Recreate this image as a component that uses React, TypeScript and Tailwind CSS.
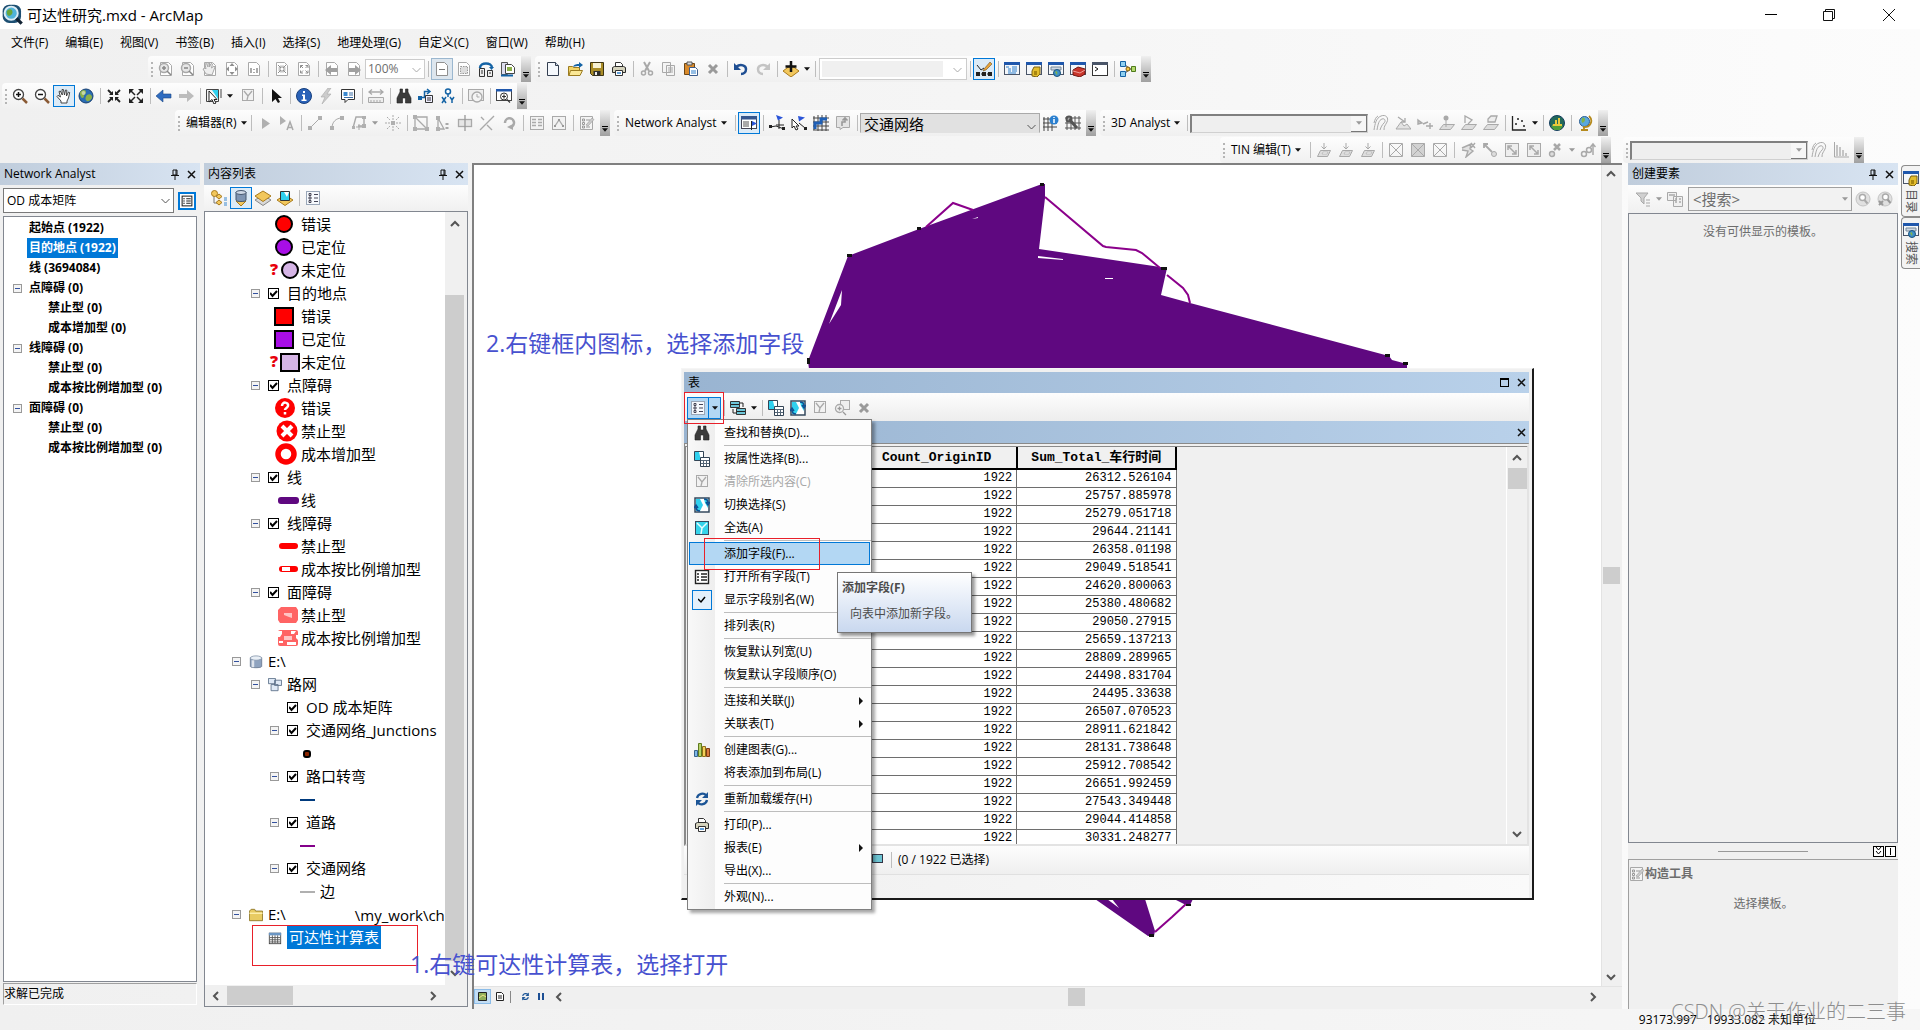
import { useState, type ReactNode } from 'react';

const g = '#a9a9a9';

const page = (color: string) => <path d="M2.5 1.5h8l3 3v10h-11z" fill="#fff" stroke={color} />;
const windowFrame = (
  <>
    <rect x="0.5" y="1.5" width="15" height="12" fill="#f4f7fa" stroke="#4a5568" />
    <path d="M0 1h16v3H0z" fill="#1f57ac" />
  </>
);
const globe = (
  <>
    <circle cx="8" cy="8" r="7" fill="#2a6db5" stroke="#173f70" />
    <path d="M3 3c3-2 5-1 5 1s-2 2-2 4-2 3-3 1-2-4 0-6zM9 7c3-2 5 0 5 2s-3 5-5 4-2-4 0-6z" fill="#8cb04a" />
    <circle cx="5.5" cy="5" r="2" fill="#fff" opacity=".5" />
  </>
);
const tin = (
  <>
    <path d="M1.5 1.5h13v13h-13z" fill="none" stroke={g} />
    <path d="M2 2l12 12M14 2L2 14" stroke={g} />
  </>
);
const plate = (
  <>
    <path d="M4.5 8.5h10l-3 6h-10z" fill="#ddd" stroke={g} />
    <path d="M6 12h5l1-2H7z" fill="#f4f4f4" stroke={g} strokeWidth=".6" />
    <path d="M8 1v6M5.5 4.5L8 7l2.5-2.5" stroke={g} fill="none" />
  </>
);
const selectTile = (
  <>
    <rect x="1" y="1" width="14" height="14" fill="#fff" stroke="#34495e" strokeWidth="1.5" />
    <path d="M2 2h4l3 6-3 6H2z" fill="#2fd0ee" />
    <path d="M10 2h4v9l-3-5z" fill="#2fd0ee" />
  </>
);

const icons: Record<string, ReactNode> = {
  logo: (
    <>
      <rect x="0.5" y="0.5" width="14" height="14" rx="5" fill="#1d4f72" />
      <circle cx="7" cy="7" r="5" fill="#4fb3d9" stroke="#dcecf5" strokeWidth="1.5" />
      <path d="M4 5c2-2 4-1 4 1s-2 3-3 3-2-3-1-4z" fill="#68a63c" />
      <path d="M11 11l4 4" stroke="#123" strokeWidth="2.5" />
    </>
  ),
  pageZoomIn: <>{page(g)}<circle cx="6" cy="7" r="4.5" fill="#e6e6e6" stroke={g} strokeWidth="1.5" /><path d="M4 7h4M6 5v4M9 10l4 4" stroke="#888" strokeWidth="1.5" /></>,
  pageZoomOut: <>{page(g)}<circle cx="6" cy="7" r="4.5" fill="#e6e6e6" stroke={g} strokeWidth="1.5" /><path d="M4 7h4M9 10l4 4" stroke="#888" strokeWidth="1.5" /></>,
  pageHand: <>{page(g)}<path d="M4 13L1 8l2-1 1 1-1-5 1.5-.5L6 6V2h1.5v4L9 2.5l1.5.5L9.5 7 12 5l1 1-3 8z" fill="#eee" stroke={g} /></>,
  pageFull: <>{page(g)}<path d="M8 2l2.500 3h-5zM8 14l2.500-3h-5zM2 8l3-2.500v5zM14 8l-3-2.500v5z" fill="#8f8f8f" /></>,
  pageOne: <>{page(g)}<path d="M5 7v5M11 7v5M8 8v1M8 11v1" stroke="#8f8f8f" strokeWidth="1.5" /></>,
  pageIn: <>{page(g)}<path d="M4 4l3 3H4.5M7 7V4.5M12 4L9 7h2.5M9 7V4.5M4 12l3-3H4.5M7 9v2.5M12 12L9 9h2.5M9 9v2.5" fill="none" stroke="#8f8f8f" /></>,
  pageOut: <>{page(g)}<path d="M4.5 7V4.5H7M4.5 4.5L7 7M9.5 4.5H12V7M12 4.5L9.5 7M4.5 9.5V12H7M4.5 12L7 9.5M9.5 12H12V9.5M12 12L9.5 9.5" fill="none" stroke="#8f8f8f" /></>,
  pagePrev: <>{page(g)}<path d="M1 9l6-5v3h6v4H7v3z" fill="#a0a0a0" /></>,
  pageNext: <>{page(g)}<path d="M15 9L9 4v3H3v4h6v3z" fill="#a0a0a0" /></>,
  draft: <>{page('#909090')}<path d="M5 8.5h6" stroke="#777" /></>,
  focusFrame: <>{page(g)}<rect x="4.5" y="5.5" width="7" height="7" fill="#ddd" stroke="#999" strokeDasharray="1.5 1" /></>,
  layoutSwap: (
    <>
      <path d="M2 7c0-6 12-6 12 0" fill="none" stroke="#1463a5" strokeWidth="2.5" />
      <path d="M11 6h5l-2.5 3z" fill="#1463a5" />
      <path d="M1.5 7.5h5v8h-5zM9.5 9.5h5v6h-5z" fill="#eee" stroke="#333" />
      <path d="M3 10h2M3 12h2M11 12h2" stroke="#333" />
    </>
  ),
  dataPages: (
    <>
      <path d="M1.5 1.5h6v12h-6z" fill="#dde" stroke="#555" />
      <path d="M5.5 3.5h6l3 3v6h-9z" fill="#fff" stroke="#444" />
      <rect x="7" y="6" width="5" height="4" fill="#8cb04a" />
      <path d="M1 14.5h12" stroke="#1463a5" strokeWidth="2" />
    </>
  ),
  newDoc: <><path d="M2.5 1.5h8l3 3v10h-11z" fill="#f5f8fc" stroke="#333e50" /><path d="M10.5 1.5v3h3" fill="#ccd8e8" stroke="#333e50" /></>,
  open: (
    <>
      <path d="M1.5 5.5h4l1 1h6v8h-11z" fill="#f3d467" stroke="#9b7b20" />
      <path d="M3.5 9.5h12l-2.5 5h-11z" fill="#fbe896" stroke="#9b7b20" />
      <path d="M6 6c1-3 4-3 6-3V1l4 3-4 3V5c-2 0-4 0-6 1z" fill="#1463a5" />
    </>
  ),
  save: (
    <>
      <path d="M1.5 1.5h13v13h-11l-2-2z" fill="#a98c26" stroke="#3d3311" />
      <path d="M4 2h8v5H4z" fill="#f7f1d2" />
      <path d="M4.5 10h7v4.5h-7z" fill="#2d2d2d" />
      <path d="M6 11h2v3H6z" fill="#eee" />
    </>
  ),
  print: (
    <>
      <path d="M4.5 6V1.5h5l2 2V6" fill="#fff" stroke="#333" />
      <path d="M1.5 6.5l2-1h9l2 1v5h-13z" fill="#d5d3bd" stroke="#2c2c2c" />
      <path d="M4.5 9.5h7v5h-7z" fill="#fff" stroke="#333" />
      <path d="M6 12h4" stroke="#2d7fcb" strokeWidth="1.5" />
    </>
  ),
  cut: <><path d="M5 1l5 9M11 1L6 10" stroke={g} strokeWidth="2" /><circle cx="4.5" cy="12" r="2" fill="none" stroke={g} strokeWidth="1.5" /><circle cx="11.5" cy="12" r="2" fill="none" stroke={g} strokeWidth="1.5" /></>,
  copy: <><path d="M1.5 1.5h8v10h-8zM5.5 4.5h8v10h-8z" fill="#f4f4f4" stroke={g} /><path d="M7 7h5M7 9h5M7 11h5" stroke={g} /></>,
  paste: (
    <>
      <path d="M1.5 2.5h10v11h-10z" fill="#d98a2b" stroke="#6d4615" />
      <path d="M4 1h5v3H4z" fill="#ddd" stroke="#555" />
      <path d="M6.5 6.5h6l2 2v6h-8z" fill="#fff" stroke="#3b5c8c" />
      <path d="M8 10h5M8 12h5" stroke="#2d7fcb" />
    </>
  ),
  remove: <path d="M4 4l8 8M12 4l-8 8" stroke="#9a9a9a" strokeWidth="3" />,
  undo: <><path d="M3 6c5-4 10-1 10 2s-2 5-5 5" fill="none" stroke="#1f4f93" strokeWidth="2.5" /><path d="M1 2v7h7z" fill="#1f4f93" /></>,
  redo: <><path d="M13 6C8 2 3 5 3 8s2 5 5 5" fill="none" stroke="#c4c4c4" strokeWidth="2.5" /><path d="M15 2v7H8z" fill="#c4c4c4" /></>,
  addData: <><path d="M8 4l8 6-8 6-8-6z" fill="#f2c75c" stroke="#a87a1c" /><path d="M8 0v11M2.5 5.5h11" stroke="#111" strokeWidth="2.5" /></>,
  editTool: <><path d="M2 13h12" stroke="#222" strokeDasharray="2 1" /><path d="M0 11h4v4H0zM6 11h4v4H6zM12 11h4v4h-4z" fill="#222" /><path d="M1 4l4 5 3-2" stroke="#222" fill="none" /><path d="M8 8l6-7 2 2-6 6-3 1z" fill="#e8a33a" stroke="#5b3e12" strokeWidth=".5" /></>,
  tocWin: <>{windowFrame}<path d="M2 6h3M4 8h3M4 10h3M8 6h5M8 8h5M8 10h5M4 12h8" stroke="#2d7fcb" /></>,
  catalogWin: <>{windowFrame}<path d="M8 6h6v7l-3 3-5-1v-5z" fill="#e3bd2c" stroke="#7b6110" /><path d="M8 10h3v4H8z" fill="#a8860f" /></>,
  searchWin: <>{windowFrame}<path d="M3 6h10v3H3z" fill="#cfd8e3" stroke="#789" /><circle cx="9" cy="12" r="3.5" fill="#3d8fc9" stroke="#1c537c" /><path d="M7 11c2-2 3 1 2 3z" fill="#85b64a" /></>,
  toolboxWin: <>{windowFrame}<path d="M3 9l5-3 7 2v5l-5 3-7-2z" fill="#c8352b" stroke="#701713" /><path d="M3 10l7 2 5-3" stroke="#f0a09a" fill="none" /></>,
  pythonWin: <><rect x="0.5" y="1.5" width="15" height="13" fill="#fff" stroke="#333" /><path d="M0 1h16v3H0z" fill="#4a5568" /><path d="M3 6l3 2-3 2" fill="none" stroke="#111" /></>,
  model: <><path d="M4 3l6 5-6 5M9 8h5" stroke="#333" fill="none" /><path d="M.5.5h5v5h-5zM.5 10.5h5v5h-5z" fill="#8fd0f0" stroke="#1463a5" /><path d="M11.5 5.5h4v5h-4z" fill="#b4d96c" stroke="#4e7a1b" /><circle cx="8" cy="8" r="2" fill="#f5c542" stroke="#7b5c0c" /></>,
  zoomIn: <><circle cx="6.5" cy="6.5" r="5" fill="#fff" stroke="#444" strokeWidth="1.3" /><path d="M4 6.5h5M6.5 4v5" stroke="#111" strokeWidth="1.5" /><path d="M10.5 10.5l4.5 4.5" stroke="#8a5a35" strokeWidth="2.5" /></>,
  zoomOut: <><circle cx="6.5" cy="6.5" r="5" fill="#fff" stroke="#444" strokeWidth="1.3" /><path d="M4 6.5h5" stroke="#111" strokeWidth="1.5" /><path d="M10.5 10.5l4.5 4.5" stroke="#8a5a35" strokeWidth="2.5" /></>,
  pan: <path d="M5 15v-2L1 8.5l1-1.2L4.5 9 3 3.5l1.3-.5L6.3 7 6 1.5h1.4L8.5 7l1-5 1.3.2L10.5 8l2-4 1.2.6L12.5 10 11 13v2z" fill="#fff" stroke="#333" strokeWidth=".9" />,
  globe,
  fixedIn: <><path d="M2 2l4 4M14 2l-4 4M2 14l4-4M14 14l-4-4" stroke="#222" strokeWidth="1.8" /><path d="M7 3v4H3zM9 3v4h4zM7 13V9H3zM9 13V9h4z" fill="#222" /></>,
  fixedOut: <><path d="M3 3l4 4M13 3L9 7M3 13l4-4M13 13L9 9" stroke="#222" strokeWidth="1.5" /><path d="M1 6V1h5zM15 6V1h-5zM1 10v5h5zM15 10v5h-5z" fill="#222" /></>,
  back: <path d="M0 8l7-6v4h8v4H7v4z" fill="#2f6cc0" stroke="#1d4784" strokeWidth=".6" />,
  forward: <path d="M16 8L9 2v4H1v4h8v4z" fill="#bcbcbc" />,
  selectFeatures: (
    <>
      <path d="M.5 1.5h12v12H.5z" fill="#f4f4f4" stroke="#444" />
      <path d="M6 2h6v9z" fill="#2fd0ee" />
      <path d="M15 1v9" stroke="#444" />
      <path d="M3 3v11l3-2.500L8 16l2-1-2-3.500h3z" fill="#fff" stroke="#222" />
    </>
  ),
  clear: <><rect x="2.5" y="1.5" width="11" height="11" fill="#f2f2f2" stroke={g} /><path d="M4 3l4 5 4-5M8 8l-1 4" fill="none" stroke={g} strokeWidth="1.3" /></>,
  cursor: <path d="M4 1v13l3.5-3L10 15l2-1-2-4h4z" fill="#111" />,
  info: <><circle cx="8" cy="8" r="7.5" fill="#2a62b8" stroke="#18407e" /><path d="M7 3h2v2H7zM6 6.5h3v5h1.5V13h-5v-1.5H7V8H6z" fill="#fff" /></>,
  bolt: <path d="M10 0L3 9h4l-3 7 9-10H9l4-6z" fill="#ccc" stroke="#aaa" strokeWidth=".6" />,
  popup: <><path d="M1.5 1.5h13v10H8l-3 3v-3H1.5z" fill="#fff" stroke="#333" /><path d="M3.5 4h4v4h-4z" fill="#3c8ad0" /><path d="M9 5h4M9 7h4M4 9.5h9" stroke="#3c6ea5" /></>,
  measure: <><path d="M1 4h14M4 1.5L1 4l3 2.5M12 1.5L15 4l-3 2.5" stroke={g} strokeWidth="1.3" fill="none" /><path d="M.5 9.5h15v5H.5zM3 12v2M6 12v2M9 12v2M12 12v2" stroke={g} fill="#eee" /></>,
  find: <path d="M4 1h2.5v4h3V1H12v3l3 6v5H9.5v-5h-3v5H1v-5l3-6z" fill="#3b3b3b" stroke="#222" strokeWidth=".6" />,
  route: <><path d="M2.5 9.5h4v-6h5M9 1l3 2.5L9 6" fill="none" stroke="#1463a5" strokeWidth="1.5" /><path d="M7.5 7.5h7v7h-7z" fill="#eef" stroke="#333" /><path d="M9 10h4M9 12h4" stroke="#333" /><path d="M0 8h4v4H0z" fill="#1463a5" /></>,
  gotoXY: <><circle cx="8" cy="3.5" r="2.5" fill="#fff" stroke="#1463a5" strokeWidth="1.5" /><path d="M8 6v3M2 9l4 6M6 9l-4 6M10 9l2 3 2-3M12 12v3" stroke="#1463a5" strokeWidth="1.5" fill="none" /></>,
  time: <><rect x="0.5" y="1.5" width="15" height="11" fill="#eee" stroke={g} /><circle cx="9" cy="9" r="5" fill="#f4f4f4" stroke={g} strokeWidth="1.3" /><path d="M9 6v3h2.5" stroke={g} fill="none" /></>,
  viewer: <><rect x="0.5" y="1.5" width="15" height="11" fill="#fff" stroke="#444" /><path d="M0 1h16v2.5H0z" fill="#1f57ac" /><circle cx="8" cy="8.5" r="3.5" fill="#fff" stroke="#333" /><path d="M6 8.5h4M8 6.5v4M11 11.5l3 3" stroke="#333" strokeWidth="1.2" /></>,
  editArrow: <path d="M5 3v11l8-5.5z" fill="#b0b0b0" />,
  editText: <><path d="M1 1v9l6-4z" fill="#b0b0b0" /><path d="M8 15l3-8 3 8M9 12.5h4" fill="none" stroke="#aaa" strokeWidth="1.5" /></>,
  line: <><path d="M3 13L13 3" stroke={g} /><path d="M1 11h4v4H1zM11 1h4v4h-4z" fill="#b0b0b0" /></>,
  arc: <><path d="M3 13C3 7 7 3 13 3" fill="none" stroke={g} /><path d="M1 11h4v4H1zM11 1h4v4h-4z" fill="#b0b0b0" /></>,
  trace: <><path d="M2 13L5 2h8v9H7" fill="none" stroke={g} strokeWidth="1.4" /><path d="M1 11h3v3H1zM11 1h4v3h-4zM11 9h4v4h-4z" fill="#b0b0b0" /><path d="M8 9v6M5 12h6" stroke={g} /></>,
  pointAdd: <><path d="M8 0v5M8 11v5M0 8h5M11 8h5M2 2l3 3M14 2l-3 3M2 14l3-3M14 14l-3-3" stroke={g} strokeDasharray="2 1" /><path d="M6 6h4v4H6z" fill="#b0b0b0" /></>,
  vertices: <><path d="M2 2h12v12H2zM2 2l12 12" fill="none" stroke={g} strokeWidth="1.3" /><path d="M0 0h4v4H0zM12 12h4v4h-4zM0 12h4v4H0z" fill="#b0b0b0" /></>,
  reshape: <><path d="M3 14V3l6 11z" fill="none" stroke={g} strokeWidth="1.3" /><path d="M1 1h4v4H1zM1 12h4v4H1z" fill="#b0b0b0" /><path d="M12 8v8" stroke={g} strokeDasharray="2 2" strokeWidth="3" /></>,
  cutPoly: <><rect x="1.5" y="4.5" width="13" height="7" fill="#e6e6e6" stroke={g} strokeWidth="1.3" /><path d="M8 0v16" stroke="#999" strokeWidth="1.3" /></>,
  split: <path d="M1 15L15 1M2 2l3 3M8 10l5 5" stroke={g} strokeWidth="1.4" />,
  rotate: <><path d="M4 8a4.5 4.5 0 1 1 6 4" fill="none" stroke={g} strokeWidth="2.5" /><path d="M6 12l6-3v6z" fill={g} /></>,
  attrs: <><rect x="1.5" y="1.5" width="13" height="13" fill="#f2f2f2" stroke={g} /><path d="M3 4.5h4M3 7.5h4M3 10.5h4M9 4.5h4M9 7.5h4M9 10.5h4" stroke="#aaa" strokeWidth="1.3" /></>,
  sketchProps: <><rect x="1.5" y="1.5" width="13" height="13" fill="#f2f2f2" stroke={g} /><path d="M4 11l4-6 4 6" stroke="#aaa" strokeWidth="1.3" fill="none" /><path d="M3 10h2v2H3zM7 4h2v2H7zM11 10h2v2h-2z" fill="#999" /></>,
  createFeat: <><path d="M1.5 1.5h12v13h-12z" fill="#f4f4f4" stroke="#a8a8a8" /><path d="M3.5 4h2v2h-2zM3.5 7.5h2v2h-2zM3.5 11h2v2h-2zM7 5h4M7 12h4" fill="none" stroke="#999" /><path d="M7 10l6-7 2 1.5L9 11z" fill="#ccc" stroke="#999" strokeWidth=".6" /></>,
  naWindow: <><rect x="0.5" y="1.5" width="15" height="12" fill="#fff" stroke="#445" /><path d="M0 1h16v3.5H0z" fill="#35568e" /><path d="M2 7h6M2 9h6M2 11h6" stroke="#555" /><path d="M10.5 6v9" stroke="#222" /><path d="M11 6l5 2.5-5 2.5z" fill="#2b55d8" /></>,
  naCreate: <><path d="M1 12l6-1 8 3M10 5v9M7 10h8" stroke="#222" fill="none" /><path d="M0 10h3v3H0zM13 12h3v3h-3z" fill="#222" /><path d="M7 0l7 2.5-5 3z" fill="#2b55d8" /></>,
  naSelect: <><path d="M1 4v9l2-2 2 4 2-1-2-3h3z" fill="#fff" stroke="#222" /><path d="M8 8l6 5" stroke="#222" /><path d="M13 12h3v3h-3z" fill="#222" /><path d="M7 1l7 1.5-6 4z" fill="#2b55d8" /></>,
  naSolve: <><path d="M1 1v14M5 0v16M9 0v16M13 0v16M0 3h16M0 7h16M0 11h16M0 15h16" stroke="#444" /><path d="M2 14V8h6V4h6" fill="none" stroke="#1f5fb5" strokeWidth="3" /></>,
  naDirections: <><path d="M1.5 1.5h13v11H8l-3 2v-2H1.5z" fill="#e4e4e4" stroke={g} /><path d="M7 11V7h3V3M7.5 5.5L10 3l2.5 2.5" stroke="#999" strokeWidth="1.6" fill="none" /></>,
  naInfo: <><path d="M1 2v14M5 2v14M9 2v14M0 4h12M0 8h14M0 12h14" stroke="#444" /><circle cx="11" cy="5" r="4.5" fill="#2a7fcf" /><path d="M11 2v1M11 4v4" stroke="#fff" strokeWidth="1.5" /></>,
  naBuild: <><path d="M2 1v14M6 1v14M10 1v14M14 1v14M0 3h16M0 8h16M0 13h16" stroke="#555" /><path d="M4 4l8 9" stroke="#555" strokeWidth="3" /><circle cx="4" cy="4" r="2.5" fill="none" stroke="#555" strokeWidth="2" /></>,
  contour: <><path d="M1 15C2 9 3 3 8 1s8 2 6 6-3 4-3 8" fill="none" stroke={g} /><path d="M4 15C5 9 6 5 9 4s4 2 2 4-3 4-4 7" fill="none" stroke={g} /><path d="M1 8C2 4 3 2 5 1" fill="none" stroke={g} /></>,
  slope: <><path d="M1 14L6 7l3 4 3-2 4 5z" fill="#e2e2e2" stroke={g} /><path d="M3 2l7 5M10 3v4H6" stroke={g} fill="none" strokeWidth="1.3" /></>,
  sight: <path d="M1 5l4 3-4 1zM6 9l5-2M9 11h7M13 8v6" stroke={g} strokeWidth="1.4" fill="#ccc" />,
  interPoint: <><path d="M4.5 9.5h11l-4 5h-11z" fill="#ddd" stroke={g} /><circle cx="7" cy="3" r="2.5" fill={g} /><path d="M7 5v7" stroke={g} /></>,
  interLine: <><path d="M4.5 9.5h11l-4 5h-11z" fill="#ddd" stroke={g} /><path d="M4 8V1l7 4-4 4" fill="none" stroke={g} strokeWidth="1.3" /></>,
  interPoly: <><path d="M4.5 9.5h11l-4 5h-11z" fill="#ddd" stroke={g} /><path d="M5 7V4l3-3h6l-2 6z" fill="#eee" stroke={g} strokeWidth="1.3" /></>,
  profile: <><path d="M1.5 1v14H15" fill="none" stroke="#222" strokeWidth="1.3" /><path d="M4 9h2M5 8v2M6 4h2M7 3v2M10 6h2M11 5v2M12 11h2M13 10v2" stroke="#222" /></>,
  scene: <><circle cx="8" cy="8" r="7.5" fill="#236a5a" stroke="#143d5e" /><path d="M4 9h2V5h2v4h1V3h2v6h2v3H3z" fill="#e9c93c" /><path d="M2 11h12l-3 4H5z" fill="#4f9e3a" /></>,
  arcGlobe: <><circle cx="7.5" cy="6.5" r="5" fill="#5aa8dd" stroke="#2a5c92" /><path d="M5 3c3-1 4 2 2 4s-3 0-2-4z" fill="#7fb24b" /><path d="M12 1c5 5 1 12-6 11M7 12v3M4 15h7" stroke="#b58a1d" strokeWidth="1.8" fill="none" /></>,
  plate,
  tin,
  tinFill: <><path d="M1 1h14v14H1z" fill="#d2d2d2" />{tin}</>,
  tinPen: <path d="M2 6l9-4-1 5 3 2-7 6 2-6-6-1M11 1l4 5M15 1l-4 5" stroke={g} fill="#e2e2e2" strokeWidth="1.4" />,
  tinMove: <><path d="M2 2l8 8M2 6V2h4" stroke={g} strokeWidth="1.8" fill="none" /><circle cx="12" cy="12" r="2.5" fill="#ddd" stroke={g} /></>,
  tinSwap: <><rect x="1.5" y="1.5" width="13" height="13" fill="#eee" stroke={g} /><path d="M4 4l8 8M8 12h4V8M4 8V4h4" stroke={g} fill="none" strokeWidth="1.5" /></>,
  tinDelete: <><path d="M6 2l6 6M12 2L6 8" stroke="#a8a8a8" strokeWidth="2.5" /><circle cx="4" cy="12" r="2.5" fill="#ddd" stroke={g} strokeWidth="1.4" /></>,
  tinLink: <><circle cx="4" cy="12" r="2.5" fill="none" stroke={g} strokeWidth="1.5" /><circle cx="9" cy="8" r="2.5" fill="none" stroke={g} strokeWidth="1.5" /><path d="M13 13V3M10.5 5L13 2l2.5 3" stroke={g} fill="none" strokeWidth="1.5" /></>,
  histogram: <><path d="M1.5 0v15H16" stroke={g} fill="none" /><path d="M3 3h2v11H3zM6 5h2v9H6zM9 8h2v6H9zM12 11h2v3h-2z" fill="#c4c4c4" /></>,
  byDrawing: <><path d="M3 5v8h7M4 5l4 2" stroke="#777" fill="none" /><circle cx="3.5" cy="3.5" r="3" fill="#f2c75c" stroke="#a87a1c" /><path d="M8 4l3 2.5L8 9 5 6.5zM8 10l3 2.5L8 15l-3-2.5z" fill="#f2c75c" stroke="#a87a1c" /><path d="M13 8h3M13 10h3M13 13h3M13 15h3" stroke="#3c8ad0" /></>,
  bySource: <><path d="M3 11h10l-5 5z" fill="#f2c75c" stroke="#a87a1c" /><path d="M3 2v8c0 2 10 2 10 0V2z" fill="#7f95b2" stroke="#44566e" /><ellipse cx="8" cy="2.5" rx="5" ry="2" fill="#cfd9e6" stroke="#44566e" /></>,
  byVisible: <><path d="M8 5l8 5-8 5.5L0 10z" fill="#d8d8d8" stroke="#888" /><path d="M8 1l8 5-8 5.5L0 6z" fill="#f2c75c" stroke="#a87a1c" /></>,
  bySelect: <><path d="M8 5l8 5-8 5.5L0 10z" fill="#f2c75c" stroke="#a87a1c" /><path d="M3.5 1.5h9v9h-9z" fill="#2fd0ee" stroke="#333" /><path d="M7 2l3 5 2-5z" fill="#fff" /></>,
  options: <><rect x="1.5" y="1.5" width="13" height="13" fill="#f6f9fd" stroke="#9aa7b8" /><path d="M4 3.5h2v2H4zM4 7h2v2H4zM4 10.5h2v2H4z" fill="none" stroke="#445" /><path d="M9 4.5h4M9 8h4M9 11.5h4" stroke="#445" /></>,
  drum: <><path d="M1.5 3v10c0 2 13 2 13 0V3z" fill="#8fa3bf" stroke="#6b7c94" /><ellipse cx="8" cy="3.5" rx="6.5" ry="2.5" fill="#e9eff6" stroke="#8b9bb0" /><path d="M3 6h3v8H3z" fill="#fff" opacity=".7" /></>,
  dataset: <path d="M.5.5h8v6h-8zM7.5 2.5h8v6h-8zM3.5 7.5h8v7h-8z" fill="#dfe9f6" stroke="#5b7089" />,
  folder: <><path d="M.5 3.5l2-2h4l1 2h8v11H.5z" fill="#e8cb62" stroke="#8b7425" /><path d="M.5 6h15" stroke="#fff3b5" strokeWidth="1.5" /></>,
  table: <><rect x="1.5" y="2.5" width="13" height="12" fill="#fff" stroke="#444" /><path d="M1 2h14v3H1z" fill="#6b96c4" /><path d="M2 7.5h12M2 10h12M2 12.5h12M5 5v9M8 5v9M11 5v9" stroke="#555" /></>,
  related: <><path d="M.5 1.5h9v6h-9zM6.5 8.5h9v6h-9z" fill="#6ec6d8" stroke="#333" /><path d="M1 4.5h8M7 11.5h8M3 9v4h3M13 7V3h-3" stroke="#222" fill="none" /></>,
  selectBy: (
    <>
      <path d="M.5.5h9v9h-9z" fill="#2fd0ee" stroke="#345" />
      <path d="M5 1h4v8H7z" fill="#fff" />
      <path d="M6.5 6.5h9v9h-9z" fill="#fff" stroke="#345" />
      <path d="M7 9.5h8M7 12.5h8M9.5 9v6M12.5 9v6" stroke="#567" />
    </>
  ),
  switchSel: <>{selectTile}<path d="M10 2c3 0 4 1 4 4M12 5l2 3 2-3M6 14c-3 0-4-1-4-4M0 11l2-3 2 3" fill="none" stroke="#0f4f91" strokeWidth="1.5" /></>,
  zoomSel: <><rect x="6.5" y="0.5" width="9" height="9" fill="#eee" stroke={g} /><circle cx="5.5" cy="8.5" r="4" fill="#f5f5f5" stroke={g} strokeWidth="1.3" /><path d="M3.5 8.5h4M5.5 6.5v4M9 12l3 3" stroke="#999" strokeWidth="1.3" /></>,
  selectAll: <><rect x="1.5" y="1.5" width="13" height="13" fill="#35d3ea" stroke="#34495e" /><path d="M3 3l5 5 5-5M8 8l-1 6" fill="none" stroke="#e9fdff" strokeWidth="1.5" /></>,
  fields: <><rect x="1.5" y="1.5" width="13" height="13" fill="#fff" stroke="#222" strokeWidth="1.4" /><path d="M3 5h2M3 8h2M3 11h2M7 5h6M7 8h6M7 11h6" stroke="#222" strokeWidth="1.6" /></>,
  chart: <><path d="M.5 8.5h3v6h-3z" fill="#7db7e8" stroke="#39648c" /><path d="M4.5 1.5h3v13h-3z" fill="#b6d36a" stroke="#607b1f" /><path d="M8.5 4.5h3v10h-3z" fill="#f3d05a" stroke="#8e6f18" /><path d="M12.5 6.5h3v8h-3z" fill="#d97a3d" stroke="#7c3d15" /></>,
  refresh: <><path d="M3 7c1-5 7-5 9-3M13 9c-1 5-7 5-9 3" fill="none" stroke="#1c5596" strokeWidth="2.3" /><path d="M14 1v6H8zM2 15V9h6z" fill="#1c5596" /></>,
  filter: <><path d="M1 2h12L9 7v6l-3-3V7z" fill="#d0d0d0" stroke={g} /><path d="M11 9h4M11 12h4M11 15h4" stroke={g} /></>,
  organize: <><path d="M.5 1.5h9v8h-9zM6.5 5.5h9v10h-9z" fill="#f0f0f0" stroke={g} /><path d="M2 4h6M8 8h2M12 8h2M8 11h2M12 11h2" stroke={g} strokeWidth="1.5" /></>,
  searchRound: <><circle cx="8" cy="8" r="7" fill="#e0e0e0" stroke="#c4c4c4" /><circle cx="7.5" cy="6.5" r="3" fill="#fff" stroke="#aaa" strokeWidth="1.4" /><path d="M9.5 9l3 3.5" stroke="#aaa" strokeWidth="2" /></>,
  searchClear: <><circle cx="8" cy="8" r="7" fill="#e0e0e0" stroke="#c4c4c4" /><circle cx="8.5" cy="6" r="3" fill="#fff" stroke="#aaa" strokeWidth="1.4" /><path d="M10.5 8.5l3 3.5M2 10l4 4M6 10l-4 4" stroke="#999" strokeWidth="2" /></>,
};

function Icon({ name, size = 16 }: { name: string; size?: number }) {
  return (
    <svg width={size} height={size} viewBox="0 0 16 16" fill="none" className="shrink-0" aria-hidden="true">
      {icons[name]}
    </svg>
  );
}

function Caret({ muted = false }: { muted?: boolean }) {
  return (
    <svg width="6" height="4" viewBox="0 0 7 4" className="shrink-0" aria-hidden="true">
      <path d="M0 0h7L3.5 4z" fill={muted ? '#999' : '#111'} />
    </svg>
  );
}

function Chevron({ dir }: { dir: 'up' | 'down' | 'left' | 'right' }) {
  const d = { up: 'M1 7l4-4 4 4', down: 'M1 3l4 4 4-4', left: 'M7 1L3 5l4 4', right: 'M3 1l4 4-4 4' }[dir];
  return (
    <svg width="10" height="10" viewBox="0 0 10 10" fill="none" aria-hidden="true">
      <path d={d} stroke="#555" strokeWidth="2" />
    </svg>
  );
}

function CloseMark() {
  return (
    <svg width="9" height="9" viewBox="0 0 9 9" fill="none" aria-hidden="true">
      <path d="M1 1l7 7M8 1L1 8" stroke="#111" strokeWidth="1.5" />
    </svg>
  );
}

function Tool({ name, active = false }: { name: string; active?: boolean }) {
  return (
    <button
      type="button"
      aria-label={name}
      className={`flex h-[22px] w-[22px] shrink-0 items-center justify-center ${
        active ? 'border border-[#0078d7] bg-[#dcebf7]' : ''
      }`}
    >
      <Icon name={name} />
    </button>
  );
}

function Tools({ names }: { names: string[] }) {
  return (
    <>
      {names.map((n, i) => (
        <Tool key={i} name={n} />
      ))}
    </>
  );
}

function DropArrow({ muted = false }: { muted?: boolean }) {
  return (
    <button type="button" aria-label="more" className="flex h-[22px] w-[10px] shrink-0 items-center justify-center">
      <Caret muted={muted} />
    </button>
  );
}

function Sep() {
  return (
    <span className="flex h-4 w-[6px] shrink-0 justify-center">
      <span className="w-px bg-[#bdbdbd]" />
    </span>
  );
}

function Toolbar({ label, children }: { label: string; children: ReactNode }) {
  return (
    <div
      role="toolbar"
      aria-label={label}
      className="flex h-[26px] shrink-0 items-center rounded-l-sm bg-gradient-to-b from-[#fdfdfd] to-[#f0f0f0]"
    >
      <span className="flex w-[7px] shrink-0 justify-center">
        <span className="h-[15px] border-l-2 border-dotted border-[#b5b5b5]" />
      </span>
      {children}
      <button
        type="button"
        aria-label={`${label} options`}
        className="ml-[2px] flex h-[26px] w-[10px] shrink-0 flex-col items-center justify-end gap-px bg-gradient-to-b from-[#f0f0f0] to-[#a0a0a0] pb-1"
      >
        <span className="h-px w-[6px] bg-black" />
        <Caret />
      </button>
    </div>
  );
}

function TextMenu({ className, children }: { className: string; children: ReactNode }) {
  return (
    <button type="button" className={`flex h-[22px] shrink-0 items-center gap-1 whitespace-nowrap pl-1 ${className}`}>
      {children}
      <Caret />
    </button>
  );
}

// classic sunken combo used by the raster / terrain layer pickers
function SunkenSelect({ label }: { label: string }) {
  return (
    <span className="relative flex h-[19px] w-[178px] shrink-0">
      <select
        disabled
        aria-label={label}
        className="w-full appearance-none border-2 border-r border-b border-[#808080] border-r-[#d0d0d0] border-b-[#d0d0d0] bg-[#efefef]"
      />
      <span className="pointer-events-none absolute top-[2px] right-px flex h-4 w-4 items-center justify-center border-r border-b border-[#777] bg-[#f6f6f6]">
        <Caret muted />
      </span>
    </span>
  );
}

function PanelHeader({ title }: { title: string }) {
  return (
    <header className="flex h-[22px] shrink-0 items-center bg-gradient-to-r from-[#c0cddc] to-[#d8e4f2] pr-1 pl-1">
      <h2 className="grow">{title}</h2>
      <button type="button" aria-label="pin" className="mr-2">
        <svg width="8" height="11" viewBox="0 0 8 11" fill="none" aria-hidden="true">
          <path d="M2 1h4v5H2zM5 1v5M0 6.5h8M4 7v4" stroke="#111" />
        </svg>
      </button>
      <button type="button" aria-label="close">
        <CloseMark />
      </button>
    </header>
  );
}

function Expander() {
  return (
    <button
      type="button"
      aria-label="collapse"
      className="flex h-[9px] w-[9px] shrink-0 items-center justify-center border border-[#999] bg-[#f4f4f4]"
    >
      <span className="h-px w-[5px] bg-[#33519e]" />
    </button>
  );
}

const naTree = [
  { text: '起始点 (1922)', level: 0 },
  { text: '目的地点 (1922)', level: 0, selected: true },
  { text: '线 (3694084)', level: 0 },
  { text: '点障碍 (0)', level: 0, open: true },
  { text: '禁止型 (0)', level: 1 },
  { text: '成本增加型 (0)', level: 1 },
  { text: '线障碍 (0)', level: 0, open: true },
  { text: '禁止型 (0)', level: 1 },
  { text: '成本按比例增加型 (0)', level: 1 },
  { text: '面障碍 (0)', level: 0, open: true },
  { text: '禁止型 (0)', level: 1 },
  { text: '成本按比例增加型 (0)', level: 1 },
];

function NetworkAnalystPanel() {
  return (
    <aside className="flex w-[200px] shrink-0 flex-col">
      <PanelHeader title="Network Analyst" />
      <div className="flex h-[31px] shrink-0 items-center gap-1 pl-[3px]">
        <span className="relative flex h-[25px] w-[171px]">
          <select aria-label="分析图层" className="w-full appearance-none border border-[#7a7a7a] bg-white pl-[3px]">
            <option>OD 成本矩阵</option>
          </select>
          <svg className="pointer-events-none absolute top-[10px] right-1" width="9" height="6" viewBox="0 0 9 6" fill="none" aria-hidden="true">
            <path d="M.5 1l4 4 4-4" stroke="#555" />
          </svg>
        </span>
        <button type="button" aria-label="属性" className="flex h-[18px] w-[18px] items-center justify-center border-2 border-[#0078d7] bg-white">
          <Icon name="fields" size={12} />
        </button>
      </div>
      <ul className="mr-[3px] ml-[3px] grow border border-[#828790] bg-white pt-px font-bold">
        {naTree.map((n, i) => (
          <li key={i} className={`flex h-5 items-center ${n.level ? 'pl-[42px]' : 'pl-[9px]'}`}>
            {n.level === 0 && <span className="flex w-[14px] shrink-0">{n.open && <Expander />}</span>}
            <span className={`px-[2px] leading-[20px] whitespace-nowrap ${n.selected ? 'bg-[#0078d7] text-white' : ''}`}>{n.text}</span>
          </li>
        ))}
      </ul>
      <p className="mx-[3px] mt-px mb-1 h-[22px] shrink-0 border border-[#a0a0a0] border-r-white border-b-white leading-[20px]">求解已完成</p>
    </aside>
  );
}

const symbols: Record<string, ReactNode> = {
  redDot: <circle cx="10" cy="11" r="8" fill="red" stroke="#000" strokeWidth="2" />,
  purpleDot: <circle cx="10" cy="11" r="8" fill="#a80ee6" stroke="#000" strokeWidth="2" />,
  lilacDot: <circle cx="16" cy="11" r="8" fill="#d6b5e6" stroke="#000" strokeWidth="2" />,
  redBox: <rect x="1" y="3" width="18" height="17" fill="red" stroke="#000" strokeWidth="2" />,
  purpleBox: <rect x="1" y="3" width="18" height="17" fill="#a80ee6" stroke="#000" strokeWidth="2" />,
  lilacBox: <rect x="7" y="3" width="18" height="17" fill="#d6b5e6" stroke="#000" strokeWidth="2" />,
  ask: (
    <>
      <circle cx="11" cy="11" r="10" fill="red" />
      <path d="M8 9c0-5 7-4 6 0-.5 2-3 2-3 4M11 15v2.5" stroke="#fff" strokeWidth="2.5" />
    </>
  ),
  cross: (
    <>
      <circle cx="13" cy="11" r="10.5" fill="red" />
      <path d="M8 6l10 10M18 6L8 16" stroke="#fff" strokeWidth="4" />
    </>
  ),
  ring: <circle cx="12" cy="11" r="8" fill="#fff" stroke="red" strokeWidth="5.5" />,
  purpleLine: <rect x="4" y="8" width="21" height="7" rx="3" fill="#5f0880" />,
  redLine: <rect x="5" y="8" width="19" height="6" rx="3" fill="red" />,
  redLineOpen: (
    <>
      <rect x="5" y="8" width="19" height="6" rx="3" fill="red" />
      <path d="M8 9h8v4H8z" fill="#fff" />
    </>
  ),
  pinkArea: (
    <>
      <path d="M7 3h15l2 3v10l-2 3H6l-2-3V6z" fill="#ff6464" />
      <path d="M10 9h8v5l-3-1-5-2z" fill="#ffc4c4" />
    </>
  ),
  pinkHatch: (
    <>
      <rect x="4" y="3" width="20" height="16" rx="2" fill="#ff6464" />
      <path d="M4 4h4v3l-2 3H4zM17 4h5l-2 3h-3zM22 8h2v5l-2-2zM13 15h9v3h-9zM5 14h4v2H5z" fill="#fff" />
      <path d="M10 9h8v4h-8z" fill="#ffc4c4" />
    </>
  ),
  junction: <rect x="11" y="9" width="6" height="6" rx="2" fill="#8b2500" stroke="#000" strokeWidth="2" />,
  blueLine: <path d="M7 12h15" stroke="#003a7d" strokeWidth="2" />,
  magentaLine: <path d="M7 12h15" stroke="#84008a" strokeWidth="2" />,
  grayLine: <path d="M7 12h15" stroke="#b0b0b0" strokeWidth="2" />,
};

type TocRow = {
  text: string;
  level: number;
  open?: boolean;
  check?: boolean;
  icon?: string;
  symbol?: string;
  mark?: boolean;
  tail?: string;
  selected?: boolean;
};

const toc: TocRow[] = [
  { text: '错误', level: 2, symbol: 'redDot' },
  { text: '已定位', level: 2, symbol: 'purpleDot' },
  { text: '未定位', level: 2, symbol: 'lilacDot', mark: true },
  { text: '目的地点', level: 1, open: true, check: true },
  { text: '错误', level: 2, symbol: 'redBox' },
  { text: '已定位', level: 2, symbol: 'purpleBox' },
  { text: '未定位', level: 2, symbol: 'lilacBox', mark: true },
  { text: '点障碍', level: 1, open: true, check: true },
  { text: '错误', level: 2, symbol: 'ask' },
  { text: '禁止型', level: 2, symbol: 'cross' },
  { text: '成本增加型', level: 2, symbol: 'ring' },
  { text: '线', level: 1, open: true, check: true },
  { text: '线', level: 2, symbol: 'purpleLine' },
  { text: '线障碍', level: 1, open: true, check: true },
  { text: '禁止型', level: 2, symbol: 'redLine' },
  { text: '成本按比例增加型', level: 2, symbol: 'redLineOpen' },
  { text: '面障碍', level: 1, open: true, check: true },
  { text: '禁止型', level: 2, symbol: 'pinkArea' },
  { text: '成本按比例增加型', level: 2, symbol: 'pinkHatch' },
  { text: 'E:\\', level: 0, open: true, icon: 'drum' },
  { text: '路网', level: 1, open: true, icon: 'dataset' },
  { text: 'OD 成本矩阵', level: 2, check: true },
  { text: '交通网络_Junctions', level: 2, open: true, check: true },
  { text: '', level: 3, symbol: 'junction' },
  { text: '路口转弯', level: 2, open: true, check: true },
  { text: '', level: 3, symbol: 'blueLine' },
  { text: '道路', level: 2, open: true, check: true },
  { text: '', level: 3, symbol: 'magentaLine' },
  { text: '交通网络', level: 2, open: true, check: true },
  { text: '边', level: 3, symbol: 'grayLine' },
  { text: 'E:\\', level: 0, open: true, icon: 'folder', tail: '\\my_work\\ch' },
  { text: '可达性计算表', level: 1, icon: 'table', selected: true },
];

const treeIndent = ['pl-[27px]', 'pl-[46px]', 'pl-[65px]'];

function LayerCheck({ label }: { label: string }) {
  const [on, setOn] = useState(true);
  return (
    <span className="relative flex w-[19px] shrink-0">
      <input
        type="checkbox"
        aria-label={label}
        checked={on}
        onChange={() => setOn(!on)}
        className="h-[11px] w-[11px] appearance-none border border-black bg-white"
      />
      {on && (
        <svg className="pointer-events-none absolute top-[2px] left-[2px]" width="8" height="8" viewBox="0 0 8 8" fill="none" aria-hidden="true">
          <path d="M0 3l2.5 3L7 1" stroke="#000" strokeWidth="2" />
        </svg>
      )}
    </span>
  );
}

function TocItem({ row }: { row: TocRow }) {
  if (row.symbol) {
    return (
      <li className={`flex h-[23px] items-center leading-[22px] ${row.level === 3 ? 'pl-[88px]' : 'pl-[69px]'}`}>
        <span className="relative flex w-[27px] shrink-0">
          <svg width="27" height="23" viewBox="0 0 27 23" fill="none" aria-hidden="true">
            {symbols[row.symbol]}
          </svg>
          {row.mark && <span className="absolute top-0 -left-1 text-base leading-[20px] font-black text-red-600">?</span>}
        </span>
        <span className="pb-px">{row.text}</span>
      </li>
    );
  }
  return (
    <li className={`flex h-[23px] items-center ${treeIndent[row.level]}`}>
      <span className="flex w-[17px] shrink-0">{row.open && <Expander />}</span>
      {row.check && <LayerCheck label={row.text} />}
      {row.icon && (
        <span className="flex w-[19px] shrink-0">
          <Icon name={row.icon} size={14} />
        </span>
      )}
      <span className={`leading-[23px] ${row.selected ? 'bg-[#0078d7] px-[2px] text-white' : ''}`}>{row.text}</span>
      {row.tail && <span className="pl-[69px]">{row.tail}</span>}
    </li>
  );
}

function ContentsPanel() {
  return (
    <aside className="relative flex w-[264px] shrink-0 flex-col">
      <PanelHeader title="内容列表" />
      <div className="flex h-[26px] shrink-0 items-center bg-gradient-to-b from-[#fdfdfd] to-[#f0f0f0] pl-1">
        <Tool name="byDrawing" />
        <Tool name="bySource" active />
        <Tools names={['byVisible', 'bySelect']} />
        <Sep />
        <Tool name="options" />
      </div>
      <div className="mb-[2px] flex min-h-0 grow flex-col border border-[#828790] bg-white">
        <div className="flex min-h-0 grow">
          <ul className="min-w-0 grow overflow-hidden pt-px text-[15px] whitespace-nowrap">
            {toc.map((row, i) => (
              <TocItem key={i} row={row} />
            ))}
          </ul>
          <div className="flex w-[22px] shrink-0 flex-col items-center bg-[#f0f0f0] pr-[3px]">
            <button type="button" aria-label="up" className="flex h-[23px] items-center">
              <Chevron dir="up" />
            </button>
            <span className="h-[60px]" />
            <span className="w-[19px] grow bg-[#cdcdcd]" />
            <button type="button" aria-label="down" className="flex h-6 items-center">
              <Chevron dir="down" />
            </button>
          </div>
        </div>
        <div className="flex h-[21px] shrink-0 items-center bg-[#f0f0f0] pr-[29px] pl-[6px]">
          <button type="button" aria-label="left" className="w-4">
            <Chevron dir="left" />
          </button>
          <span className="h-[19px] w-[66px] bg-[#cdcdcd]" />
          <span className="grow" />
          <button type="button" aria-label="right">
            <Chevron dir="right" />
          </button>
        </div>
      </div>
      {/* callout around the result table entry */}
      <div className="pointer-events-none absolute top-[762px] left-12 h-[41px] w-[166px] border border-[#e8202a]" />
    </aside>
  );
}

const tableRows = [
  '26312.526104', '25757.885978', '25279.051718', '29644.21141', '26358.01198', '29049.518541', '24620.800063',
  '25380.480682', '29050.27915', '25659.137213', '28809.289965', '24498.831704', '24495.33638', '26507.070523',
  '28911.621842', '28131.738648', '25912.708542', '26651.992459', '27543.349448', '29044.414858', '30331.248277',
];

type MenuEntry = { text: string; icon?: string; sub?: boolean; disabled?: boolean; active?: boolean; checked?: boolean };

const menuGroups: MenuEntry[][] = [
  [{ text: '查找和替换(D)...', icon: 'find' }],
  [
    { text: '按属性选择(B)...', icon: 'selectBy' },
    { text: '清除所选内容(C)', icon: 'clear', disabled: true },
    { text: '切换选择(S)', icon: 'switchSel' },
    { text: '全选(A)', icon: 'selectAll' },
  ],
  [
    { text: '添加字段(F)...', active: true },
    { text: '打开所有字段(T)', icon: 'fields' },
    { text: '显示字段别名(W)', checked: true },
  ],
  [{ text: '排列表(R)' }],
  [{ text: '恢复默认列宽(U)' }, { text: '恢复默认字段顺序(O)' }],
  [
    { text: '连接和关联(J)', sub: true },
    { text: '关联表(T)', sub: true },
  ],
  [{ text: '创建图表(G)...', icon: 'chart' }, { text: '将表添加到布局(L)' }],
  [{ text: '重新加载缓存(H)', icon: 'refresh' }],
  [{ text: '打印(P)...', icon: 'print' }, { text: '报表(E)', sub: true }, { text: '导出(X)...' }],
  [{ text: '外观(N)...' }],
];

function OptionsMenu() {
  return (
    <div
      role="menu"
      className="absolute top-[50px] left-[5px] w-[185px] border border-[#808080] bg-gradient-to-r from-[#f8f8f8] from-0% via-[#eeeeee] via-[15%] to-[#fdfdfd] to-[15%] py-px shadow-[3px_3px_3px_rgba(0,0,0,0.35)]"
    >
      {menuGroups.map((group, gi) => (
        <div key={gi}>
          {gi > 0 && (
            <div className="flex h-[3px] items-center pl-[36px]">
              <span className="h-px grow bg-[#bdbdbd]" />
            </div>
          )}
          {group.map((item) => (
            <button
              key={item.text}
              type="button"
              role="menuitem"
              disabled={item.disabled}
              className={`mx-px flex h-[23px] w-[181px] items-center border ${
                item.active ? 'border-[#0078d7] bg-[#b3d7f3]' : 'border-transparent'
              } ${item.disabled ? 'text-[#a8a8a8]' : ''}`}
            >
              <span className="flex w-[34px] shrink-0 items-center pl-[2px]">
                {item.checked ? (
                  <span className="flex h-5 w-5 items-center justify-center border border-[#0078d7] bg-[#e3f0fb]">
                    <svg width="8" height="8" viewBox="0 0 8 8" fill="none" aria-hidden="true">
                      <path d="M0 3l3 3 4-5" stroke="#000" strokeWidth="1.5" />
                    </svg>
                  </span>
                ) : (
                  item.icon && (
                    <span className="pl-[2px]">
                      <Icon name={item.icon} />
                    </span>
                  )
                )}
              </span>
              <span className="grow text-left whitespace-nowrap">{item.text}</span>
              {item.sub && (
                <svg className="mr-[6px]" width="4" height="8" viewBox="0 0 4 8" aria-hidden="true">
                  <path d="M0 0l4 4-4 4z" fill="#111" />
                </svg>
              )}
            </button>
          ))}
        </div>
      ))}
    </div>
  );
}

function TableWindow() {
  return (
    <div className="absolute top-[203px] left-[207px] flex h-[532px] w-[853px] flex-col border-t border-r-2 border-b-2 border-l border-[#f5f5f5] border-r-[#1a1a1a] border-b-[#1a1a1a] bg-[#f0f0f0] pt-[3px] pr-[3px] pl-[2px]">
      <header className="flex h-[21px] shrink-0 items-center gap-2 bg-gradient-to-r from-[#99b4d1] to-[#b9d1ea] pr-[3px] pl-1">
        <h2 className="grow">表</h2>
        <button type="button" aria-label="maximize" className="h-[9px] w-[9px] border border-t-2 border-black" />
        <button type="button" aria-label="close">
          <CloseMark />
        </button>
      </header>
      <div className="flex h-7 shrink-0 items-center bg-gradient-to-b from-[#fdfdfd] to-[#ededed] pt-px pl-[3px]">
        <button type="button" aria-label="表选项" className="flex h-[22px] w-[34px] items-center border border-[#0078d7] bg-[#b3d7f3]">
          <span className="flex h-5 w-[21px] items-center justify-center border-r border-[#0078d7]">
            <Icon name="options" />
          </span>
          <span className="flex grow justify-center">
            <Caret />
          </span>
        </button>
        <Sep />
        <Tool name="related" />
        <DropArrow />
        <Sep />
        <Tools names={['selectBy', 'switchSel', 'clear', 'zoomSel', 'remove']} />
      </div>
      <div className="flex h-[22px] shrink-0 items-center justify-end bg-gradient-to-r from-[#99b4d1] to-[#b9d1ea] pr-[3px]">
        <button type="button" aria-label="close table">
          <CloseMark />
        </button>
      </div>
      <div className="flex min-h-0 grow overflow-hidden border-2 border-t-4 border-double border-[#8a8a8a] border-r-[#e3e3e3] border-b-[#e3e3e3]">
        <div className="grow overflow-hidden pl-[171px]">
          <table className="w-[320px] table-fixed border-collapse bg-white font-['Liberation_Mono','Noto_Sans_CJK_SC',monospace] text-[12px]">
            <thead>
              <tr className="h-[22px] bg-[#f0f0f0] text-[13px]">
                <th className="border-r-2 border-b-2 border-black p-0 leading-[18px] whitespace-nowrap">Count_OriginID</th>
                <th className="border-r-2 border-b-2 border-black p-0 leading-[18px] whitespace-nowrap">Sum_Total_车行时间</th>
              </tr>
            </thead>
            <tbody>
              {tableRows.map((v) => (
                <tr key={v} className="h-[18px]">
                  <td className="border border-[#6e6e6e] p-0 pr-1 text-right leading-[17px]">1922</td>
                  <td className="border border-[#6e6e6e] p-0 pr-1 text-right leading-[17px]">{v}</td>
                </tr>
              ))}
            </tbody>
          </table>
        </div>
        <div className="flex w-[21px] shrink-0 flex-col items-center border-l border-white">
          <button type="button" aria-label="up" className="flex h-[21px] items-center">
            <Chevron dir="up" />
          </button>
          <span className="h-[21px] w-[19px] bg-[#cdcdcd]" />
          <span className="grow" />
          <button type="button" aria-label="down" className="flex h-[21px] items-center">
            <Chevron dir="down" />
          </button>
        </div>
      </div>
      <div className="flex h-[29px] shrink-0 items-center border-b border-[#e0e0e0] bg-gradient-to-b from-[#fdfdfd] to-[#efefef] pl-[188px]">
        <span className="mb-1 h-[9px] w-[11px] border border-[#334] bg-[#6cc4d2]" />
        <span className="w-[5px]" />
        <Sep />
        <span className="pl-1">(0 / 1922 已选择)</span>
      </div>
      <div className="h-[23px] shrink-0 bg-gradient-to-r from-[#f0f0f0] to-[#fafafa]" />

      <OptionsMenu />
      <div
        role="tooltip"
        className="absolute top-[203px] left-[155px] h-[61px] w-[135px] border border-[#767676] bg-gradient-to-b from-white to-[#c9d8ef] px-1 pt-[5px] leading-[20px] text-[#4c4c4c] shadow-[3px_3px_3px_rgba(0,0,0,0.4)]"
      >
        <p className="font-bold">添加字段(F)</p>
        <p className="pt-[6px] pl-2">向表中添加新字段。</p>
      </div>
      <div className="pointer-events-none absolute top-[23px] left-[2px] h-8 w-10 border border-[#e8202a]" />
      <div className="pointer-events-none absolute top-[169px] left-[22px] h-8 w-[116px] border border-[#e8202a]" />
    </div>
  );
}

function MapDrawing() {
  return (
    <svg className="absolute inset-0 h-full w-full" aria-hidden="true">
      <g transform="translate(-474 -165)">
        <path
          d="M808 361L848 256L919 229L1042 184H1045V198L1039 249L1167 268L1161 295L1190 303L1389 356L1392 360L1407 364V369H809z"
          fill="#5f0880"
        />
        <path d="M842 290L841 305L829 324zM1038 256l25 3v1l-25-2zM1105 278h8v1h-8zM972 219l6-2v1z" fill="#fff" />
        <path d="M1095 899L1148 936H1154L1155 931L1145 899zM1174 899L1186 905H1190L1193 899z" fill="#5f0880" />
        <path d="M1107 899l12 9-7-9z" fill="#fff" />
        <path
          d="M926 227L953 203L973 210M1045 197L1103 246L1106 247L1136 250L1142 253L1160 268M1167 275L1183 288L1188 295L1190 303M1155 932L1172 917L1186 904"
          fill="none"
          stroke="#8b008b"
          strokeWidth="2"
        />
        <path
          d="M1040 183h4v3h-4zM917 227h4v3h-4zM847 254h5v3h-5zM1161 267h6v3h-6zM807 358h3v6h-3zM1385 354h5v3h-5zM1403 362h5v3h-5zM1149 934h5v3h-5zM1186 904h5v2h-5z"
          fill="#111"
        />
      </g>
    </svg>
  );
}

function MapView() {
  return (
    <section className="relative mr-[6px] ml-1 flex min-w-0 grow flex-col border-t-2 border-l-2 border-[#808080] bg-[#f0f0f0]">
      <div className="flex min-h-0 grow">
        <div className="relative min-w-0 grow bg-white">
          <MapDrawing />
          <TableWindow />
          <p className="absolute top-[162px] left-3 text-[23px] leading-[32px] whitespace-nowrap text-[#4751cf]">2.右键框内图标，选择添加字段</p>
        </div>
        <div className="flex w-[21px] shrink-0 flex-col items-center justify-between border-l border-[#e3e3e3] pr-[2px]">
          <button type="button" aria-label="up" className="flex h-[18px] items-center">
            <Chevron dir="up" />
          </button>
          <span className="h-[17px] w-[17px] bg-[#cdcdcd]" />
          <button type="button" aria-label="down" className="flex h-[18px] items-center">
            <Chevron dir="down" />
          </button>
        </div>
      </div>
      <div className="mb-[3px] flex h-5 shrink-0 items-center border-t border-[#e3e3e3] pr-6">
        <button type="button" aria-label="data view" className="flex h-[15px] w-[17px] items-center justify-center border border-[#8bbce8] bg-[#c4def5]">
          <svg width="9" height="9" viewBox="0 0 9 9" aria-hidden="true">
            <path d="M.5.5h8v8h-8z" fill="#8fae5a" stroke="#222" />
            <path d="M1 6l4-3 3 2" stroke="#f3e48a" fill="none" />
          </svg>
        </button>
        <button type="button" aria-label="layout view" className="flex w-[17px] justify-center">
          <svg width="8" height="9" viewBox="0 0 8 9" aria-hidden="true">
            <path d="M.5.5h5l2 2v6h-7z" fill="#fff" stroke="#222" />
            <path d="M2 4h4M2 6h4" stroke="#222" />
          </svg>
        </button>
        <span className="mr-[10px] ml-[2px] h-3 w-px bg-[#888]" />
        <button type="button" aria-label="refresh" className="flex w-[17px] items-center">
          <Icon name="refresh" size={9} />
        </button>
        <button type="button" aria-label="pause" className="flex w-4 gap-[2px]">
          <span className="h-[7px] w-[2px] bg-[#1c4f94]" />
          <span className="h-[7px] w-[2px] bg-[#1c4f94]" />
        </button>
        <button type="button" aria-label="left">
          <Chevron dir="left" />
        </button>
        <span className="grow" />
        <span className="h-[18px] w-[17px] bg-[#cdcdcd]" />
        <span className="grow" />
        <button type="button" aria-label="right">
          <Chevron dir="right" />
        </button>
      </div>
      <p className="pointer-events-none absolute top-[783px] -left-16 text-[23px] leading-[32px] whitespace-nowrap text-[#4751cf]">1.右键可达性计算表，选择打开</p>
    </section>
  );
}

function CreateFeaturesPanel() {
  return (
    <aside className="flex w-[270px] shrink-0 flex-col text-[#6d6d6d]">
      <div className="text-black">
        <PanelHeader title="创建要素" />
      </div>
      <div className="flex h-[28px] shrink-0 items-center bg-gradient-to-b from-[#fdfdfd] to-[#f0f0f0] pl-1">
        <Tool name="filter" />
        <DropArrow muted />
        <Tool name="organize" />
        <span className="w-[2px]" />
        <span className="relative flex h-6 w-[164px]">
          <input aria-label="搜索" defaultValue="<搜索>" className="w-full border border-[#a0a0a0] bg-[#f2f2f2] pl-1 text-[15px]" />
          <span className="pointer-events-none absolute top-[10px] right-1 flex">
            <Caret muted />
          </span>
        </span>
        <Tools names={['searchRound', 'searchClear']} />
      </div>
      <div className="grow border border-[#828790] bg-[#f0f0f0] pt-2 text-center leading-[20px]">没有可供显示的模板。</div>
      <div className="flex h-4 shrink-0 items-center bg-[#f0f0f0]">
        <span className="flex grow justify-center pl-6">
          <span className="h-px w-[90px] bg-[#999]" />
        </span>
        <button type="button" aria-label="collapse" className="flex h-[11px] w-[11px] items-center justify-center border border-black bg-white">
          <svg width="7" height="8" viewBox="0 0 7 8" fill="none" aria-hidden="true">
            <path d="M1 0l2.5 3L6 0M1 4l2.5 3L6 4" stroke="#000" />
          </svg>
        </button>
        <button type="button" aria-label="split" className="mr-[2px] ml-px flex h-[11px] w-[11px] items-center justify-center border border-black bg-white">
          <span className="h-[7px] w-px bg-black" />
        </button>
      </div>
      <div className="h-[150px] shrink-0 border-t border-l border-[#a0a0a0] bg-[#f0f0f0]">
        <h3 className="flex h-6 items-center pt-1 font-bold">
          <Icon name="createFeat" />
          构造工具
        </h3>
        <p className="pt-[10px] text-center leading-[20px]">选择模板。</p>
      </div>
    </aside>
  );
}

const menuItems = ['文件(F)', '编辑(E)', '视图(V)', '书签(B)', '插入(I)', '选择(S)', '地理处理(G)', '自定义(C)', '窗口(W)', '帮助(H)'];

export default function App() {
  return (
    <div className="relative flex h-screen flex-col overflow-hidden bg-gradient-to-r from-[#f0f0f0] via-[#f5f5f5] to-[#fcfcfc] font-['Open_Sans','Noto_Sans_CJK_SC',sans-serif] text-[12px] leading-[16px] text-black">
      {/* Title bar */}
      <header className="flex h-[29px] shrink-0 items-center bg-white pl-[2px]">
        <Icon name="logo" size={21} />
        <h1 className="grow pl-1 text-[15px]">可达性研究.mxd - ArcMap</h1>
        <button type="button" aria-label="minimize" className="flex w-[58px] justify-center">
          <span className="h-px w-3 bg-black" />
        </button>
        <button type="button" aria-label="restore" className="flex w-[58px] justify-center">
          <svg width="12" height="12" viewBox="0 0 12 12" fill="none" aria-hidden="true">
            <path d="M.5 2.5h9v9h-9zM2.5 2.5v-2h9v9h-2" stroke="#111" />
          </svg>
        </button>
        <button type="button" aria-label="close" className="flex w-[62px] justify-center">
          <svg width="12" height="12" viewBox="0 0 12 12" fill="none" aria-hidden="true">
            <path d="M0 0l12 12M12 0L0 12" stroke="#111" />
          </svg>
        </button>
      </header>

      <nav className="flex h-[27px] shrink-0 items-center gap-[17px] pl-[11px]">
        {menuItems.map((m) => (
          <button key={m} type="button" className="whitespace-nowrap">
            {m}
          </button>
        ))}
      </nav>

      {/* Toolbars */}
      <div className="flex shrink-0 flex-col gap-px">
        <div className="flex gap-1 pl-[148px]">
          <Toolbar label="布局">
            <Tools names={['pageZoomIn', 'pageZoomOut', 'pageHand', 'pageFull', 'pageOne']} />
            <Sep />
            <Tools names={['pageIn', 'pageOut']} />
            <Sep />
            <Tools names={['pagePrev', 'pageNext']} />
            <span className="relative flex h-5 w-[60px] shrink-0">
              <select aria-label="缩放" disabled className="w-full appearance-none border border-[#ccc] bg-white pl-[2px] text-[#6d6d6d] opacity-100">
                <option>100%</option>
              </select>
              <svg className="pointer-events-none absolute top-2 right-1" width="9" height="6" viewBox="0 0 9 6" fill="none" aria-hidden="true">
                <path d="M.5 1l4 4 4-4" stroke="#aaa" />
              </svg>
            </span>
            <Sep />
            <button type="button" aria-label="draft" className="flex h-[22px] w-[22px] items-center justify-center border border-[#9bb7cf] bg-[#dde6ee]">
              <Icon name="draft" />
            </button>
            <Tools names={['focusFrame', 'layoutSwap', 'dataPages']} />
          </Toolbar>
          <Toolbar label="标准">
            <Tools names={['newDoc', 'open', 'save', 'print']} />
            <Sep />
            <Tools names={['cut', 'copy', 'paste', 'remove']} />
            <Sep />
            <Tools names={['undo', 'redo']} />
            <Sep />
            <Tool name="addData" />
            <DropArrow />
            <Sep />
            <span className="relative flex h-[22px] w-[149px] shrink-0 pl-px">
              <select aria-label="比例" disabled className="w-full appearance-none border border-[#ccc] bg-white" />
              <span className="pointer-events-none absolute top-[3px] left-1 h-4 w-[121px] bg-[#f0f0f0]" />
              <svg className="pointer-events-none absolute top-[9px] right-[5px]" width="9" height="6" viewBox="0 0 9 6" fill="none" aria-hidden="true">
                <path d="M.5 1l4 4 4-4" stroke="#aaa" />
              </svg>
            </span>
            <Sep />
            <Tool name="editTool" active />
            <Sep />
            <Tools names={['tocWin', 'catalogWin', 'searchWin', 'toolboxWin', 'pythonWin']} />
            <Sep />
            <Tool name="model" />
          </Toolbar>
        </div>

        <div className="flex pl-[2px]">
          <Toolbar label="工具">
            <Tools names={['zoomIn', 'zoomOut']} />
            <Tool name="pan" active />
            <Tool name="globe" />
            <Sep />
            <Tools names={['fixedIn', 'fixedOut']} />
            <Sep />
            <Tools names={['back', 'forward']} />
            <Sep />
            <Tool name="selectFeatures" />
            <DropArrow />
            <span className="w-[2px]" />
            <Tool name="clear" />
            <Sep />
            <Tool name="cursor" />
            <Sep />
            <Tools names={['info', 'bolt', 'popup']} />
            <Sep />
            <Tool name="measure" />
            <Sep />
            <Tools names={['find', 'route', 'gotoXY']} />
            <Sep />
            <Tool name="time" />
            <Sep />
            <Tool name="viewer" />
          </Toolbar>
        </div>

        <div className="flex gap-1 pl-[175px]">
          <Toolbar label="编辑器">
            <TextMenu className="w-[66px]">编辑器(R)</TextMenu>
            <Sep />
            <Tools names={['editArrow', 'editText']} />
            <Sep />
            <Tools names={['line', 'arc', 'trace']} />
            <DropArrow muted />
            <span className="w-[2px]" />
            <Tool name="pointAdd" />
            <Sep />
            <Tools names={['vertices', 'reshape', 'cutPoly', 'split', 'rotate']} />
            <Sep />
            <Tools names={['attrs', 'sketchProps']} />
            <Sep />
            <Tool name="createFeat" />
          </Toolbar>
          <Toolbar label="Network Analyst">
            <TextMenu className="w-[111px]">Network Analyst</TextMenu>
            <Sep />
            <Tool name="naWindow" active />
            <Sep />
            <Tools names={['naCreate', 'naSelect', 'naSolve', 'naDirections']} />
            <Sep />
            <span className="relative flex h-5 w-[180px] shrink-0">
              <select aria-label="网络数据集" className="w-full appearance-none border border-[#aaa] border-b-transparent bg-[#e1e1e1] pt-[2px] pl-[3px] text-[15px]">
                <option>交通网络</option>
              </select>
              <svg className="pointer-events-none absolute top-[11px] right-1" width="9" height="6" viewBox="0 0 9 6" fill="none" aria-hidden="true">
                <path d="M.5 1l4 4 4-4" stroke="#555" />
              </svg>
            </span>
            <Tools names={['naInfo', 'naBuild']} />
          </Toolbar>
          <Toolbar label="3D Analyst">
            <TextMenu className="w-[77px]">3D Analyst</TextMenu>
            <Sep />
            <SunkenSelect label="3D 图层" />
            <span className="w-[2px]" />
            <Tools names={['contour', 'slope', 'sight', 'interPoint', 'interLine', 'interPoly']} />
            <Sep />
            <Tool name="profile" />
            <DropArrow />
            <Sep />
            <Tool name="scene" />
            <Sep />
            <Tool name="arcGlobe" />
          </Toolbar>
        </div>

        <div className="flex gap-3 pl-[1220px]">
          <Toolbar label="TIN 编辑">
            <TextMenu className="w-20">TIN 编辑(T)</TextMenu>
            <Sep />
            <Tools names={['plate', 'plate', 'plate']} />
            <Sep />
            <Tools names={['tin', 'tinFill', 'tin']} />
            <Sep />
            <Tools names={['tinPen', 'tinMove', 'tinSwap', 'tinSwap', 'tinDelete']} />
            <DropArrow muted />
            <Tool name="tinLink" />
          </Toolbar>
          <Toolbar label="Spatial Analyst">
            <SunkenSelect label="栅格图层" />
            <Tools names={['contour', 'histogram']} />
          </Toolbar>
        </div>
      </div>

      {/* Docked windows */}
      <main className="flex min-h-0 grow">
        <NetworkAnalystPanel />
        <span className="w-1 shrink-0" />
        <ContentsPanel />
        <MapView />
        <CreateFeaturesPanel />
        <div className="ml-[3px] flex w-[19px] shrink-0 flex-col pt-[2px] text-[#555]">
          {[
            { text: '目录', icon: 'catalogWin' },
            { text: '搜索', icon: 'searchWin' },
          ].map((tab) => (
            <button
              key={tab.text}
              type="button"
              className="flex h-[52px] flex-col items-center gap-[3px] rounded-l border border-r-0 border-[#8c8c8c] bg-[#f3f3f3] pt-1"
            >
              <Icon name={tab.icon} />
              <span className="leading-[12px] [text-orientation:sideways] [writing-mode:vertical-rl]">{tab.text}</span>
            </button>
          ))}
        </div>
      </main>

      <footer className="flex h-[21px] shrink-0 items-center justify-end gap-[10px] bg-gradient-to-r from-[#f0f0f0] to-[#f6f6f6] pr-[104px]">
        <span>93173.997</span>
        <span>19933.082 未知单位</span>
      </footer>
      <p className="pointer-events-none absolute right-[14px] bottom-1 text-[20px] leading-[28px] font-light whitespace-nowrap text-[#8d8d8d]">
        CSDN @关于作业的二三事
      </p>
    </div>
  );
}
